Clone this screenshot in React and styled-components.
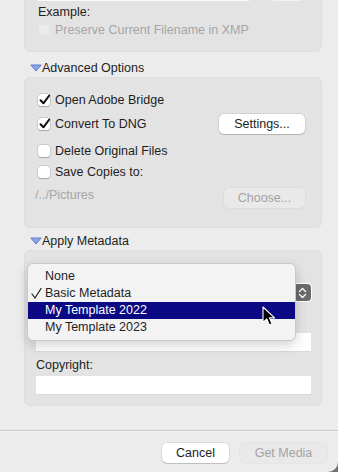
import React from 'react'
import styled, { createGlobalStyle } from 'styled-components'

const GlobalStyle = createGlobalStyle`
html, body {
  margin: 0;
  padding: 0;
  background: #707070;
}
body {
  font-family: 'Liberation Sans', Arial, sans-serif;
}
`

const Window = styled.div`
width: 338px;
height: 472px;
overflow: hidden;
background: #ececec;
border-bottom-right-radius: 10px;
display: flex;
flex-direction: column;
color: #1e1e1e;
font-size: 12.5px;
`

const Content = styled.div`
flex: 1;
margin-top: -30px;
padding: 0 16px 0 24px;
display: flex;
flex-direction: column;
`

const Panel = styled.div`
position: relative;
background: #e3e3e3;
border: 1px solid #dedede;
border-radius: 6px;
margin-top: ${props => props.$mt || 0}px;
padding: ${props => props.$pad};
display: flex;
flex-direction: column;
`

const TopRow = styled.div`
display: flex;
align-items: flex-end;
height: 23px;
margin-left: 2px;
gap: 22px;
`

const TopField = styled.div`
width: 211px;
height: 23px;
background: #fafafa;
`

const TopButton = styled.div`
width: 32px;
height: 21px;
background: #f2f2f2;
border-radius: 4px;
`

const Label = styled.div`
line-height: 16px;
height: 16px;
margin-top: ${props => props.$mt || 0}px;
margin-left: ${props => props.$ml || 0}px;
color: ${props => (props.$disabled ? '#a6a6a6' : 'inherit')};
`

const CheckRow = styled.div`
display: flex;
align-items: center;
justify-content: space-between;
height: ${props => props.$h || 20}px;
margin-left: 2px;
margin-top: ${props => props.$mt || 0}px;
`

const CheckLabel = styled.div`
display: flex;
align-items: center;
gap: 5px;
color: ${props => (props.$disabled ? '#a6a6a6' : 'inherit')};
`

const Box = styled.div`
position: relative;
width: 12px;
height: 12px;
border-radius: 3px;
background: ${props => (props.$disabled ? '#ebebeb' : '#ffffff')};
box-shadow: ${props =>
  props.$disabled
    ? 'inset 0 0 0 1px rgba(0,0,0,0.03)'
    : '0 0 0 0.5px rgba(0,0,0,0.18), 0 0.5px 1px rgba(0,0,0,0.2)'};

svg {
  position: absolute;
  left: 0px;
  top: -1px;
}
`

const PushButton = styled.div`
width: ${props => props.$w}px;
height: 20px;
margin-top: ${props => props.$mt || 0}px;
border-radius: 5px;
display: flex;
align-items: center;
justify-content: center;
background: ${props => (props.$disabled ? '#e9e9e9' : '#ffffff')};
color: ${props => (props.$disabled ? '#a3a3a3' : '#1e1e1e')};
box-shadow: ${props =>
  props.$disabled
    ? '0 0 0 0.5px rgba(0,0,0,0.06)'
    : '0 0 0 0.5px rgba(0,0,0,0.14), 0 1px 1px rgba(0,0,0,0.14)'};
`

const PathRow = styled.div`
display: flex;
justify-content: space-between;
align-items: flex-start;
margin-top: 4px;
margin-left: -1px;
`

const SectionHeader = styled.div`
display: flex;
align-items: center;
height: 16px;
margin-top: ${props => props.$mt}px;
padding-left: 6px;
`

const Popup = styled.div`
height: 19px;
margin-top: 20px;
margin-right: -1px;
border-radius: 5px;
background: #ffffff;
display: flex;
justify-content: flex-end;
align-items: center;
padding-right: 1px;
`

const Stepper = styled.div`
width: 17px;
height: 17px;
border-radius: 4px;
background: #6a6a6a;
display: flex;
align-items: center;
justify-content: center;
`

const Field = styled.div`
height: 19px;
margin-top: ${props => props.$mt || 0}px;
background: #ffffff;
border-bottom: 1px solid #d8d8d8;
box-sizing: border-box;
`

const Menu = styled.div`
position: absolute;
left: 2px;
top: 12px;
width: 269px;
padding: 4px 0;
box-sizing: border-box;
background: #f3f3f3;
border: 1px solid #c9c9c9;
border-radius: 6px;
box-shadow: 0 4px 12px rgba(0,0,0,0.18);
`

const MenuItem = styled.div`
position: relative;
height: 17px;
line-height: 17px;
padding-left: 17px;
background: ${props => (props.$active ? '#0b0a84' : 'transparent')};
color: ${props => (props.$active ? '#ffffff' : '#1e1e1e')};

svg {
  position: absolute;
  left: 3px;
  top: 3px;
}
`

const Pointer = styled.svg`
position: absolute;
left: 237px;
top: 55px;
`

const Footer = styled.div`
height: 42px;
border-top: 1px solid #cbcbcb;
box-shadow: inset 0 1px 0 #f4f4f4;
display: flex;
justify-content: flex-end;
align-items: flex-start;
padding: 12px 11px 0 0;
box-sizing: border-box;
gap: 11px;
`

const Check = () => (
  <svg width="14" height="14" viewBox="0 0 14 14">
    <path d="M2.5 7.2 L5.4 10.3 L11.2 2.6" fill="none" stroke="#111" strokeWidth="2" strokeLinecap="round" strokeLinejoin="round" />
  </svg>
)

const Checkbox = ({ checked, disabled }) => (
  <Box $disabled={disabled}>{checked && <Check />}</Box>
)

const Disclosure = () => (
  <svg width="12" height="8" viewBox="0 0 12 8">
    <polygon points="0.8,1 11.2,1 6,7" fill="#8ea6e4" stroke="#5a7cd0" strokeWidth="1" strokeLinejoin="round" />
  </svg>
)

const Section = ({ title, mt }) => (
  <SectionHeader $mt={mt}>
    <Disclosure />
    {title}
  </SectionHeader>
)

const App = () => {
  return (
    <Window>
      <GlobalStyle />
      <Content>
        <Panel $pad="7px 16px 12px 11px">
          <TopRow>
            <TopField />
            <TopButton />
          </TopRow>
          <Label $mt={3} $ml={2}>Example:</Label>
          <CheckRow $h={18} $mt={1}>
            <CheckLabel $disabled>
              <Checkbox disabled />
              Preserve Current Filename in XMP
            </CheckLabel>
          </CheckRow>
        </Panel>

        <Section title="Advanced Options" mt={8} />
        <Panel $mt={1} $pad="12px 16px 19px 11px">
          <CheckRow>
            <CheckLabel>
              <Checkbox checked />
              Open Adobe Bridge
            </CheckLabel>
          </CheckRow>
          <CheckRow $mt={4}>
            <CheckLabel>
              <Checkbox checked />
              Convert To DNG
            </CheckLabel>
            <PushButton $w={86}>Settings...</PushButton>
          </CheckRow>
          <CheckRow $mt={7}>
            <CheckLabel>
              <Checkbox />
              Delete Original Files
            </CheckLabel>
          </CheckRow>
          <CheckRow $mt={1}>
            <CheckLabel>
              <Checkbox />
              Save Copies to:
            </CheckLabel>
          </CheckRow>
          <PathRow>
            <Label $mt={1} $disabled>/../Pictures</Label>
            <PushButton $w={81} $mt={2} $disabled>Choose...</PushButton>
          </PathRow>
        </Panel>

        <Section title="Apply Metadata" mt={5} />
        <Panel $mt={1} $pad="12px 10px 10px 11px">
          <Popup>
            <Stepper>
              <svg width="9" height="12" viewBox="0 0 9 12">
                <path d="M1.5 4.5 L4.5 1.5 L7.5 4.5 M1.5 7.5 L4.5 10.5 L7.5 7.5" fill="none" stroke="#fff" strokeWidth="1.4" strokeLinecap="round" strokeLinejoin="round" />
              </svg>
            </Stepper>
          </Popup>
          <Field $mt={31} />
          <Label $mt={5}>Copyright:</Label>
          <Field $mt={3} />

          <Menu>
            <MenuItem>None</MenuItem>
            <MenuItem>
              <svg width="11" height="11" viewBox="0 0 11 11">
                <path d="M1 6 L4 10 L10 0.5" fill="none" stroke="#1e1e1e" strokeWidth="1.2" strokeLinecap="round" strokeLinejoin="round" />
              </svg>
              Basic Metadata
            </MenuItem>
            <MenuItem $active>My Template 2022</MenuItem>
            <MenuItem>My Template 2023</MenuItem>
          </Menu>

          <Pointer width="14" height="21" viewBox="0 0 14 21">
            <path d="M1 1 L1 16.5 L4.8 12.9 L7.4 19 L10 17.9 L7.4 11.9 L12.6 11.9 Z" fill="#000" stroke="#fff" strokeWidth="1.1" strokeLinejoin="round" />
          </Pointer>
        </Panel>
      </Content>

      <Footer>
        <PushButton $w={67}>Cancel</PushButton>
        <PushButton $w={87} $disabled>Get Media</PushButton>
      </Footer>
    </Window>
  )
}

export default App
